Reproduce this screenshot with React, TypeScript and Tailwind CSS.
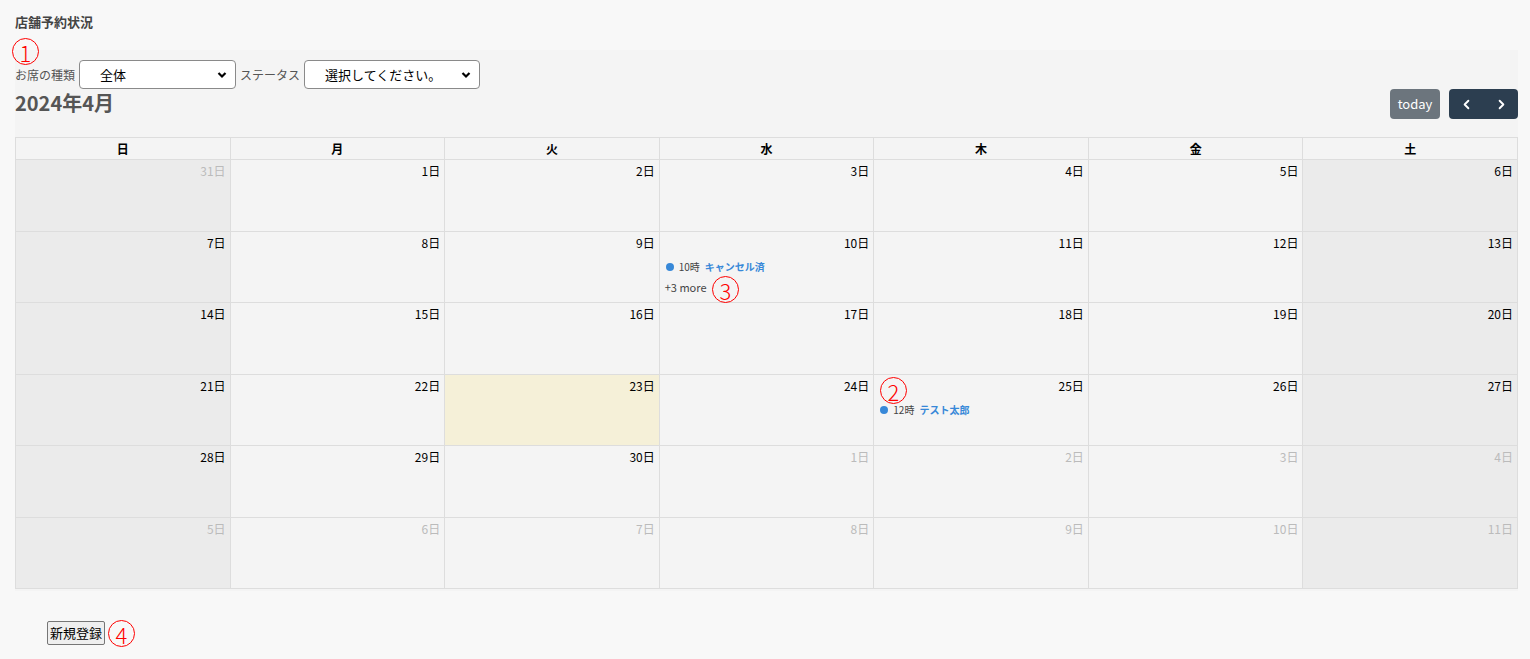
import { ChevronLeft, ChevronRight } from 'lucide-react'

type Ev = { time: string; title: string }
type Day = { label: string; other?: boolean; today?: boolean; events?: Ev[]; more?: string }

const weekdays = ['日', '月', '火', '水', '木', '金', '土']

const days: Day[] = [
  { label: '31日', other: true },
  ...Array.from({ length: 30 }, (_, i) => ({ label: `${i + 1}日` }) as Day),
  ...Array.from({ length: 11 }, (_, i) => ({ label: `${i + 1}日`, other: true }) as Day),
]
days[10] = { label: '10日', events: [{ time: '10時', title: 'キャンセル済' }], more: '+3 more' }
days[23] = { label: '23日', today: true }
days[25] = { label: '25日', events: [{ time: '12時', title: 'テスト太郎' }] }

function Marker({ n, className }: { n: string; className: string }) {
  return (
    <span
      className={`absolute w-[27px] h-[27px] rounded-full border border-[#ff0000] text-[#ff0000] flex items-center justify-center text-[22px] font-light leading-none ${className}`}
    >
      {n}
    </span>
  )
}

function Select({ value, width }: { value: string; width: string }) {
  return (
    <div className={`relative ${width} h-[29px] bg-white border border-[#8a8a8a] rounded-[4px] flex items-center pl-[20px]`}>
      <span className="text-[13px] text-black">{value}</span>
      <svg className="absolute right-[8px] top-[10px] w-[10px] h-[8px]" viewBox="0 0 10 8" fill="none" stroke="#000" strokeWidth="2.2">
        <path d="M1.5 2l3.5 3.5L8.5 2" />
      </svg>
    </div>
  )
}

export default function App() {
  return (
    <div
      className="relative min-h-screen bg-[#f8f8f8] text-[#222]"
      style={{ fontFamily: '"Noto Sans CJK JP", "Noto Sans", sans-serif' }}
    >
      <h1 className="px-[15px] pt-[12px] h-[50px] text-[13px] font-bold text-[#444]">店舗予約状況</h1>

      <div className="ml-[15px] mr-[12px] bg-[#f4f4f4] pt-[10px] pb-[2px]">
        {/* Filters */}
        <div className="flex items-center h-[29px]">
          <span className="text-[12px] text-[#555] mr-[4px]">お席の種類</span>
          <Select value="全体" width="w-[157px]" />
          <span className="text-[12px] text-[#555] mx-[4px]">ステータス</span>
          <Select value="選択してください。" width="w-[176px]" />
        </div>

        {/* Toolbar */}
        <div className="flex items-center justify-between h-[30px] mb-[18px]">
          <h2 className="text-[20px] font-bold text-[#555] leading-none -mt-[3px]">2024年4月</h2>
          <div className="flex items-center gap-[9px]">
            <button className="h-[30px] w-[50px] rounded-[4px] bg-[#6c757d] text-white text-[13px]">today</button>
            <div className="flex h-[30px] rounded-[4px] bg-[#2c3e50] text-white">
              <button className="w-[35px] flex items-center justify-center">
                <ChevronLeft size={15} strokeWidth={3} />
              </button>
              <button className="w-[34px] flex items-center justify-center">
                <ChevronRight size={15} strokeWidth={3} />
              </button>
            </div>
          </div>
        </div>

        {/* Calendar */}
        <div className="border-r border-b border-[#dddddd]">
          <div className="grid grid-cols-7 h-[22px]">
            {weekdays.map((w) => (
              <div
                key={w}
                className="border-l border-t border-[#dddddd] flex items-center justify-center text-[12px] font-bold text-black"
              >
                {w}
              </div>
            ))}
          </div>
          <div className="grid grid-cols-7 grid-rows-6 h-[429px]">
            {days.map((d, i) => {
              const weekend = i % 7 === 0 || i % 7 === 6
              const bg = d.today ? 'bg-[#f5f0d8]' : weekend ? 'bg-[#ebebeb]' : 'bg-[#f4f4f4]'
              return (
                <div key={i} className={`border-l border-t border-[#dddddd] ${bg} px-[4px] pt-[2px]`}>
                  <div className={`text-right text-[12px] leading-[17px] ${d.other ? 'text-[#bbbbbb]' : 'text-black'}`}>
                    {d.label}
                  </div>
                  {d.events?.map((e) => (
                    <div key={e.title} className="flex items-center mt-[9px] pl-[2px] text-[10px] leading-[14px]">
                      <span className="w-[8px] h-[8px] rounded-full bg-[#3788d8] mr-[5px]" />
                      <span className="text-[#444] mr-[5px]">{e.time}</span>
                      <span className="text-[#3788d8] font-bold">{e.title}</span>
                    </div>
                  ))}
                  {d.more && <div className="mt-[6px] pl-[1px] text-[11px] leading-[15px] text-[#444]">{d.more}</div>}
                </div>
              )
            })}
          </div>
        </div>
      </div>

      <div className="pl-[47px] pt-[28px]">
        <button className="h-[24px] px-[2px] text-[13px] text-black bg-[#efefef] border border-[#767676] rounded-[2px] leading-none">
          新規登録
        </button>
      </div>

      {/* Annotation markers */}
      <Marker n="1" className="left-[12px] top-[38px]" />
      <Marker n="2" className="left-[880px] top-[377px]" />
      <Marker n="3" className="left-[712px] top-[276px]" />
      <Marker n="4" className="left-[108px] top-[620px]" />
    </div>
  )
}
